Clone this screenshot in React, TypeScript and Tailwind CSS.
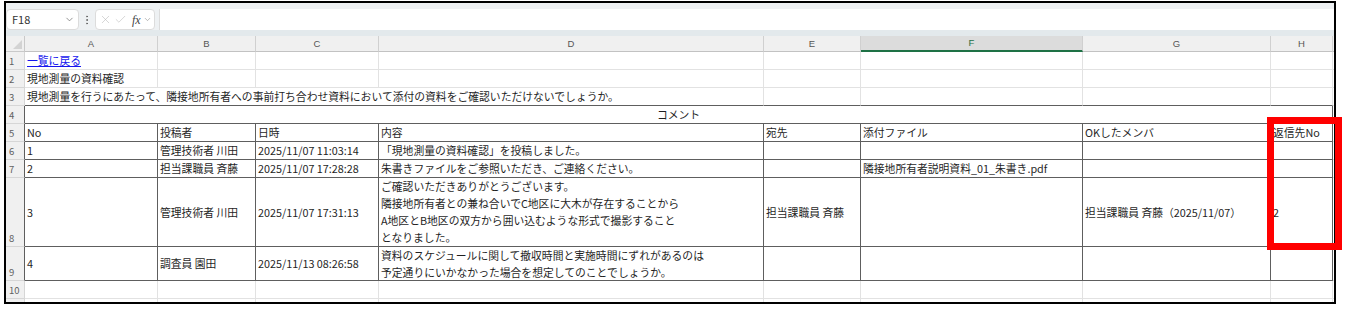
import { X, Check, ChevronDown, EllipsisVertical } from "lucide-react";

const GRID = "grid grid-cols-[19px_133px_98px_123px_385px_97px_222px_188px_62px_1fr]";
const LIGHT = "border-r border-b border-[#e2e2e2] px-[2px] flex items-center overflow-hidden whitespace-nowrap";
const DARK = "border-r border-b border-[#5e5e5e] px-[2px] flex items-center overflow-hidden whitespace-nowrap";
const TOPDARK = "border-r border-b border-r-[#e2e2e2] border-b-[#5e5e5e] px-[2px] flex items-center overflow-hidden whitespace-nowrap";

const columns = ["A", "B", "C", "D", "E", "F", "G", "H"];

function RowHead({ n, dark }: { n: number; dark?: boolean }) {
  return (
    <div
      className={`flex items-end bg-[#f0f0f0] border-b border-r border-[#d6d6d6] pl-[3px] pb-[1px] text-[9.5px] text-[#606060] ${
        dark ? "border-r-[#5e5e5e]" : ""
      }`}
    >
      {n}
    </div>
  );
}

type Comment = {
  no: string;
  author: string;
  date: string;
  body: string[];
  to: string;
  file: string;
  ok: string;
  reply: string;
};

const comments: Comment[] = [
  {
    no: "1",
    author: "管理技術者 川田",
    date: "2025/11/07 11:03:14",
    body: ["「現地測量の資料確認」を投稿しました。"],
    to: "",
    file: "",
    ok: "",
    reply: "",
  },
  {
    no: "2",
    author: "担当課職員 斉藤",
    date: "2025/11/07 17:28:28",
    body: ["朱書きファイルをご参照いただき、ご連絡ください。"],
    to: "",
    file: "隣接地所有者説明資料_01_朱書き.pdf",
    ok: "",
    reply: "",
  },
  {
    no: "3",
    author: "管理技術者 川田",
    date: "2025/11/07 17:31:13",
    body: [
      "ご確認いただきありがとうございます。",
      "隣接地所有者との兼ね合いでC地区に大木が存在することから",
      "A地区とB地区の双方から囲い込むような形式で撮影すること",
      "となりました。",
    ],
    to: "担当課職員 斉藤",
    file: "",
    ok: "担当課職員 斉藤（2025/11/07）",
    reply: "2",
  },
  {
    no: "4",
    author: "調査員 園田",
    date: "2025/11/13 08:26:58",
    body: [
      "資料のスケジュールに関して撤収時間と実施時間にずれがあるのは",
      "予定通りにいかなかった場合を想定してのことでしょうか。",
    ],
    to: "",
    file: "",
    ok: "",
    reply: "",
  },
];

const heights = ["h-[18px]", "h-[18px]", "h-[69px]", "h-[34px]"];

export default function App() {
  return (
    <div className="relative w-[1349px] h-[317px] bg-white overflow-hidden font-['Noto_Sans_CJK_JP','Noto_Sans',sans-serif] text-[10.8px] text-[#1f1f1f]">
      <div className="ml-[4px] mt-[1px] w-[1332px] h-[303px] border-2 border-black overflow-hidden bg-white flex flex-col">
        {/* formula bar */}
        <div className="h-[27px] bg-[#eef1f3] flex items-end">
          <div className="w-[73px] h-[21px] bg-white border border-[#dcdcdc] rounded-[4px] flex items-center pl-[5px] pr-[3px] justify-between">
            <span className="text-[11px] text-[#333]">F18</span>
            <ChevronDown size={11} strokeWidth={1.5} className="text-[#666]" />
          </div>
          <div className="w-[16px] h-[21px] flex items-center justify-center">
            <EllipsisVertical size={12} strokeWidth={2} className="text-[#666]" />
          </div>
          <div className="w-[60px] h-[21px] bg-white border border-[#dcdcdc] rounded-[4px] flex items-center pl-[3px] gap-[2px]">
            <X size={13} strokeWidth={1} className="text-[#b5b5b5]" />
            <Check size={13} strokeWidth={1} className="text-[#b5b5b5]" />
            <span className="ml-[3px] font-['Liberation_Serif',serif] italic text-[12px] text-[#444] leading-none">
              fx
            </span>
            <ChevronDown size={9} strokeWidth={1.5} className="text-[#888]" />
          </div>
          <div className="ml-[4px] flex-1 h-[21px] bg-white border-l border-[#dcdcdc]" />
        </div>
        <div className="h-[6px] bg-[#e3e9ec]" />

        {/* column headers */}
        <div className={`${GRID} h-[16px] bg-[#f0f0f0] text-[9.5px] text-[#555] font-['Liberation_Sans',sans-serif]`}>
          <div className="relative border-r border-b border-[#c9c9c9]">
            <div className="absolute right-[2px] bottom-[2px] w-0 h-0 border-l-[9px] border-l-transparent border-b-[9px] border-b-[#d3d3d3]" />
          </div>
          {columns.map((c) =>
            c === "F" ? (
              <div
                key={c}
                className="flex items-center justify-center bg-[#dcdcdc] border-r border-[#d0d0d0] border-b-2 border-b-[#1e7145] text-[#1e7145]"
              >
                {c}
              </div>
            ) : (
              <div key={c} className="flex items-center justify-center border-r border-b border-[#d0d0d0] border-b-[#c2c2c2]">
                {c}
              </div>
            )
          )}
          <div className="border-b border-[#c2c2c2]" />
        </div>

        {/* row 1 */}
        <div className={`${GRID} h-[18px]`}>
          <RowHead n={1} />
          <div className={LIGHT}>
            <span className="text-[#1515ee] underline">一覧に戻る</span>
          </div>
          <div className={LIGHT} />
          <div className={LIGHT} />
          <div className={LIGHT} />
          <div className={LIGHT} />
          <div className={LIGHT} />
          <div className={LIGHT} />
          <div className={LIGHT} />
          <div className="border-b border-[#e2e2e2]" />
        </div>

        {/* row 2 */}
        <div className={`${GRID} h-[18px]`}>
          <RowHead n={2} />
          <div className={LIGHT}>現地測量の資料確認</div>
          <div className={LIGHT} />
          <div className={LIGHT} />
          <div className={LIGHT} />
          <div className={LIGHT} />
          <div className={LIGHT} />
          <div className={LIGHT} />
          <div className={LIGHT} />
          <div className="border-b border-[#e2e2e2]" />
        </div>

        {/* row 3 */}
        <div className={`${GRID} h-[18px]`}>
          <RowHead n={3} />
          <div className={`${TOPDARK} col-span-4 overflow-visible`}>
            現地測量を行うにあたって、隣接地所有者への事前打ち合わせ資料において添付の資料をご確認いただけないでしょうか。
          </div>
          <div className={TOPDARK} />
          <div className={TOPDARK} />
          <div className={TOPDARK} />
          <div className={TOPDARK} />
          <div className="border-b border-[#e2e2e2]" />
        </div>

        {/* row 4 */}
        <div className={`${GRID} h-[18px]`}>
          <RowHead n={4} dark />
          <div className={`${DARK} col-span-8 justify-center`}>コメント</div>
          <div className="border-b border-[#e2e2e2]" />
        </div>

        {/* row 5 */}
        <div className={`${GRID} h-[18px]`}>
          <RowHead n={5} dark />
          {["No", "投稿者", "日時", "内容", "宛先", "添付ファイル", "OKしたメンバ", "返信先No"].map((h) => (
            <div key={h} className={DARK}>
              {h}
            </div>
          ))}
          <div className="border-b border-[#e2e2e2]" />
        </div>

        {comments.map((c, i) => (
          <div key={c.no} className={`${GRID} ${heights[i]}`}>
            <RowHead n={6 + i} dark />
            <div className={DARK}>{c.no}</div>
            <div className={DARK}>{c.author}</div>
            <div className={DARK}>{c.date}</div>
            <div className={`${DARK} flex-col !items-start justify-start leading-[17px]`}>
              {c.body.map((l) => (
                <div key={l}>{l}</div>
              ))}
            </div>
            <div className={DARK}>{c.to}</div>
            <div className={DARK}>{c.file}</div>
            <div className={DARK}>{c.ok}</div>
            <div className={DARK}>{c.reply}</div>
            <div className="border-b border-[#e2e2e2]" />
          </div>
        ))}

        {/* row 10 */}
        <div className={`${GRID} h-[18px]`}>
          <RowHead n={10} />
          <div className={LIGHT} />
          <div className={LIGHT} />
          <div className={LIGHT} />
          <div className={LIGHT} />
          <div className={LIGHT} />
          <div className={LIGHT} />
          <div className={LIGHT} />
          <div className={LIGHT} />
          <div className="border-b border-[#e2e2e2]" />
        </div>
        <div className={`${GRID} flex-1`}>
          <div className="bg-[#f0f0f0] border-r border-[#d6d6d6]" />
          <div className="border-r border-[#e2e2e2]" />
          <div className="border-r border-[#e2e2e2]" />
          <div className="border-r border-[#e2e2e2]" />
          <div className="border-r border-[#e2e2e2]" />
          <div className="border-r border-[#e2e2e2]" />
          <div className="border-r border-[#e2e2e2]" />
          <div className="border-r border-[#e2e2e2]" />
          <div className="border-r border-[#e2e2e2]" />
          <div />
        </div>
      </div>

      {/* highlight annotation */}
      <div className="absolute left-[1267px] top-[117px] w-[75px] h-[133px] border-[7px] border-[#ff0000]" />
    </div>
  );
}
